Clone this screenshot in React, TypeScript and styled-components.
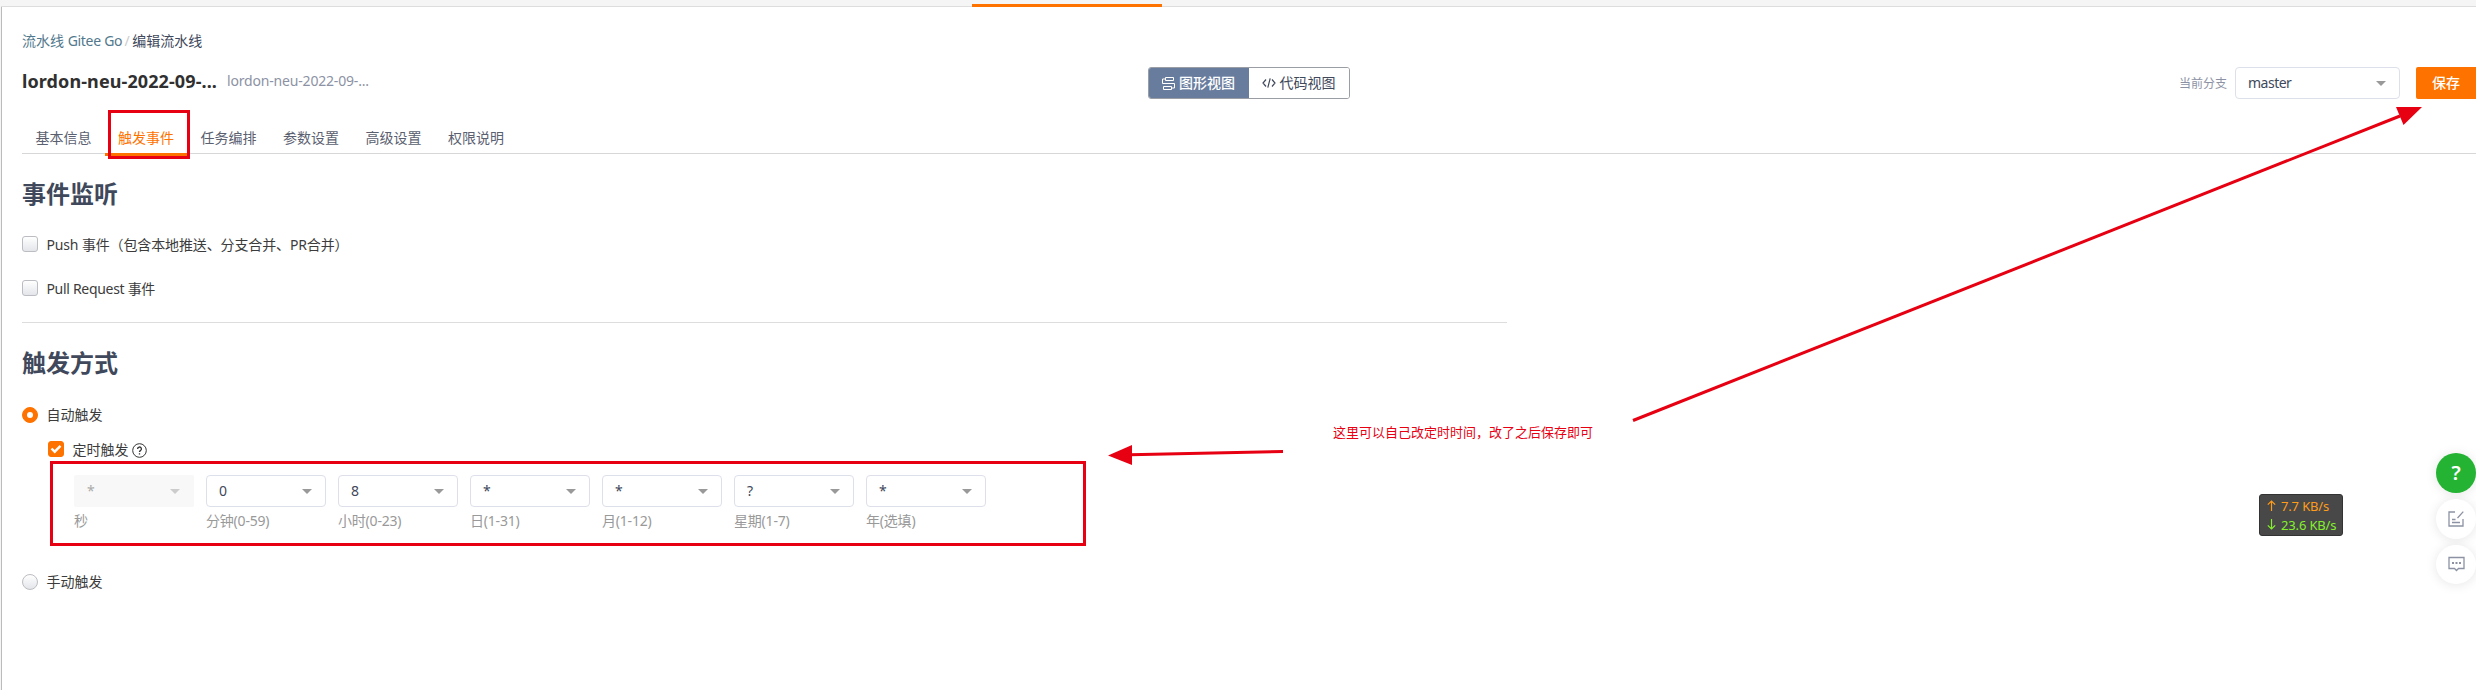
import React from 'react';
import styled, { createGlobalStyle, css } from 'styled-components';

const GlobalStyle = createGlobalStyle`
  * { box-sizing: border-box; }
  body {
    margin: 0;
    background: #fff;
    color: #40485b;
    font: 14px/20px "Noto Sans", "Noto Sans CJK SC", sans-serif;
    overflow: hidden;
  }
`;

const Page = styled.div`
  position: relative;
  height: 690px;
  border-left: 1px solid #f5f5f5;
  overflow: hidden;
`;

const TopBar = styled.div`
  height: 7px;
  padding: 4px 0 0 971px;
  background: #f5f5f5;
  border-bottom: 1px solid #ddd;
`;

const ActiveMark = styled.div`
  width: 190px;
  height: 3px;
  background: #fe7300;
`;

const Main = styled.main`
  height: 690px;
  padding-left: 20px;
  border-left: 1px solid #bbb;
`;

const Fit = styled.span<{ $ls?: number }>`
  letter-spacing: ${(p) => p.$ls ?? 0}px;
  white-space: pre;
`;

const Breadcrumb = styled.nav`
  display: flex;
  padding-top: 24px;
  height: 60px;
  white-space: nowrap;
`;

const CrumbLink = styled.a`
  color: #51788d;
`;

const Slash = styled.span`
  width: 10px;
  text-align: center;
  color: #ccc;
`;

const Header = styled.header`
  display: flex;
  align-items: center;
  height: 32px;
`;

const Names = styled.div`
  display: flex;
  align-items: center;
  width: 1126px;
  height: 32px;
  padding-bottom: 4px;
  white-space: nowrap;
`;

const Title = styled.h1`
  margin: 0;
  width: 205px;
  color: #303030;
  font-size: 18px;
  line-height: 28px;
`;

const Subtitle = styled.span`
  color: #8c92a4;
`;

const Toggle = styled.div`
  display: flex;
  width: 202px;
  height: 32px;
  border: 1px solid #9a9da3;
  border-radius: 3px;
  overflow: hidden;
`;

const ToggleItem = styled.button<{ $active?: boolean }>`
  display: flex;
  align-items: center;
  justify-content: center;
  gap: 4px;
  flex: 1;
  padding: 0 1px 0 0;
  border: 0;
  font: inherit;
  font-weight: ${(p) => (p.$active ? 500 : 400)};
  color: ${(p) => (p.$active ? '#fff' : '#40485b')};
  background: ${(p) => (p.$active ? '#687d9e' : '#fff')};
`;

const Branch = styled.div`
  display: flex;
  align-items: center;
  margin-left: auto;
`;

const BranchLabel = styled.span`
  margin-right: 8px;
  padding-top: 1px;
  font-size: 12px;
  color: #8c92a4;
`;

const Select = styled.div<{ $width: number; $disabled?: boolean }>`
  display: flex;
  align-items: center;
  justify-content: space-between;
  width: ${(p) => p.$width}px;
  height: 32px;
  padding: 0 13px 0 12px;
  border: 1px solid #dde0ea;
  border-radius: 4px;
  ${(p) =>
    p.$disabled &&
    css`
      border-color: #f8f8f8;
      border-radius: 2px;
      background: #f8f8f8;
      color: #aaa;
    `}
`;

const Caret = styled.i<{ $light?: boolean }>`
  border: 5px solid transparent;
  border-top-color: ${(p) => (p.$light ? '#ccc' : '#999')};
  border-bottom: 0;
`;

const Save = styled.button`
  width: 60px;
  height: 32px;
  margin-left: 16px;
  padding: 0;
  border: 0;
  border-radius: 2px 0 0 2px;
  background: #fe7300;
  color: #fff;
  font: inherit;
  font-weight: 500;
`;

const Tabs = styled.div`
  display: flex;
  height: 55px;
  border-bottom: 1px solid #d6d7d9;
`;

const Tab = styled.div<{ $active?: boolean }>`
  width: 82.5px;
  height: 57px;
  padding: 29px 0 0 13.5px;
  color: ${(p) => (p.$active ? '#fe7300' : '#5a6070')};
  border-bottom: 3px solid ${(p) => (p.$active ? '#fe7300' : 'transparent')};
`;

const SectionTitle = styled.h2`
  margin: 0;
  height: 36px;
  font-size: 24px;
  line-height: 34px;
  color: #40485b;
`;

const Listening = styled.section`
  width: 1485px;
  height: 169px;
  padding-top: 23px;
  border-bottom: 1px solid #ddd;
`;

const Choice = styled.label<{ $top: number; $indent?: number }>`
  display: flex;
  align-items: center;
  height: 20px;
  margin: ${(p) => p.$top}px 0 0 ${(p) => p.$indent ?? 0}px;
  color: #3c3c3c;
  white-space: nowrap;
`;

const Mark = styled.span<{ $round?: boolean; $on?: boolean }>`
  display: flex;
  align-items: center;
  justify-content: center;
  width: 16px;
  height: 16px;
  margin: 0 9px ${(p) => (p.$round ? 0 : 2)}px 0;
  border: 1px solid ${(p) => (p.$on ? '#fe7300' : '#bcbdc2')};
  border-radius: ${(p) => (p.$round ? '50%' : '3px')};
  background: ${(p) => (p.$on ? '#fe7300' : 'linear-gradient(#fff, #e3e5ea)')};
`;

const ChoiceText = styled.span`
  margin-left: -0.6px;
`;

const Dot = styled.i`
  width: 6px;
  height: 6px;
  border-radius: 50%;
  background: #fff;
`;

const HelpIcon = styled.svg`
  margin-left: 4px;
`;

const Trigger = styled.section`
  padding-top: 23px;
`;

const CronRow = styled.div`
  display: flex;
  gap: 12px;
  margin: 15px 0 0 52px;
`;

const CronField = styled.div`
  width: 120px;
  color: #999;
`;

const CronValue = styled.span<{ $muted?: boolean }>`
  color: ${(p) => (p.$muted ? '#aaa' : '#40485b')};
`;

const CronLabel = styled.div`
  margin-top: 4px;
`;

const HighlightBox = styled.div<{ $x: number; $y: number; $w: number; $h: number }>`
  position: absolute;
  left: ${(p) => p.$x}px;
  top: ${(p) => p.$y}px;
  width: ${(p) => p.$w}px;
  height: ${(p) => p.$h}px;
  border: 3px solid #e60012;
`;

const Arrows = styled.svg`
  position: absolute;
  left: -1px;
  top: 0;
`;

const Note = styled.div`
  position: absolute;
  left: 1332px;
  top: 422px;
  color: #e60012;
  font-size: 13px;
  white-space: nowrap;
`;

const Speed = styled.div`
  position: absolute;
  left: 2258px;
  top: 494px;
  width: 84px;
  height: 42px;
  padding: 1px 0 0 7px;
  border: 1px solid #333;
  border-radius: 3px;
  background: #484848;
`;

const SpeedLine = styled.div<{ $color: string }>`
  display: flex;
  align-items: center;
  gap: 5px;
  height: 19px;
  font-size: 13px;
  line-height: 18px;
  letter-spacing: -0.15px;
  color: ${(p) => p.$color};
`;

const FloatBar = styled.aside`
  position: absolute;
  right: 0;
  top: 453px;
  display: flex;
  flex-direction: column;
  gap: 6px;
`;

const FloatButton = styled.div<{ $green?: boolean }>`
  display: flex;
  align-items: center;
  justify-content: center;
  width: 40px;
  height: ${(p) => (p.$green ? 40 : 39.5)}px;
  border-radius: 50%;
  background: ${(p) => (p.$green ? '#24b333' : '#fff')};
  color: #fff;
  font-size: 20px;
  font-weight: 600;
  box-shadow: 0 1px 12px rgba(0, 0, 0, 0.1);
`;

const TABS = ['基本信息', '触发事件', '任务编排', '参数设置', '高级设置', '权限说明'];

const CRON = [
  { value: '*', label: '秒', disabled: true },
  { value: '0', label: '分钟(0-59)' },
  { value: '8', label: '小时(0-23)' },
  { value: '*', label: '日(1-31)' },
  { value: '*', label: '月(1-12)' },
  { value: '?', label: '星期(1-7)' },
  { value: '*', label: '年(选填)' },
];

export default function App() {
  return (
    <Page>
      <GlobalStyle />
      <TopBar><ActiveMark /></TopBar>
      <Main>
        <Breadcrumb>
          <CrumbLink>流水线 <Fit $ls={-0.3}>Gitee Go</Fit></CrumbLink>
          <Slash>/</Slash>
          <span>编辑流水线</span>
        </Breadcrumb>
        <Header>
          <Names>
            <Title><Fit $ls={0.1}>lordon-neu-2022-09-...</Fit></Title>
            <Subtitle><Fit $ls={-0.18}>lordon-neu-2022-09-...</Fit></Subtitle>
          </Names>
          <Toggle>
            <ToggleItem $active>
              <svg width="13" height="13" viewBox="0 0 13 13" fill="none" stroke="currentColor">
                <path d="M3.500 .5h8v3h-8zM1.500 9.500h8v3h-8zM3.500 2h-3v4.500h12v4.500h-3M4.500 6.500h4" />
              </svg>
              图形视图
            </ToggleItem>
            <ToggleItem>
              <svg width="14" height="10" viewBox="0 0 14 10" fill="none" stroke="currentColor" strokeWidth="1.200">
                <path d="M4 1.500L1 5l3 3.500M10 1.500L13 5l-3 3.500M8.200 .3l-2.400 9.400" />
              </svg>
              代码视图
            </ToggleItem>
          </Toggle>
          <Branch>
            <BranchLabel>当前分支</BranchLabel>
            <Select $width={165}><Fit $ls={-0.5}>master</Fit><Caret /></Select>
            <Save>保存</Save>
          </Branch>
        </Header>
        <Tabs>
          {TABS.map((t, i) => <Tab key={t} $active={i === 1}>{t}</Tab>)}
        </Tabs>
        <Listening>
          <SectionTitle>事件监听</SectionTitle>
          <Choice $top={22}><Mark /><ChoiceText><Fit $ls={-0.13}>Push 事件（包含本地推送、分支合并、PR合并）</Fit></ChoiceText></Choice>
          <Choice $top={24}><Mark /><ChoiceText><Fit $ls={-0.3}>Pull Request 事件</Fit></ChoiceText></Choice>
        </Listening>
        <Trigger>
          <SectionTitle>触发方式</SectionTitle>
          <Choice $top={23}><Mark $round $on><Dot /></Mark><ChoiceText>自动触发</ChoiceText></Choice>
          <Choice $top={15} $indent={26}>
            <Mark $on>
              <svg width="12" height="10" viewBox="0 0 12 10" fill="none" stroke="#fff" strokeWidth="2.400">
                <path d="M1.500 4.500l3.200 3.200L10.500 1.800" />
              </svg>
            </Mark>
            <ChoiceText>定时触发</ChoiceText>
            <HelpIcon width="15" height="15" viewBox="0 0 15 15" fill="none" stroke="#333">
              <circle cx="7.500" cy="7.500" r="6.800" />
              <path d="M5.600 6a1.900 1.900 0 1 1 2.800 1.600c-.7.4-.9.7-.9 1.500M7.500 10.200v1.300" strokeWidth="1.300" />
            </HelpIcon>
          </Choice>
          <CronRow>
            {CRON.map((f) => (
              <CronField key={f.label}>
                <Select $width={120} $disabled={f.disabled}>
                  <CronValue $muted={f.disabled}>{f.value}</CronValue>
                  <Caret $light={f.disabled} />
                </Select>
                <CronLabel><Fit $ls={-0.2}>{f.label}</Fit></CronLabel>
              </CronField>
            ))}
          </CronRow>
          <Choice $top={41}><Mark $round /><ChoiceText>手动触发</ChoiceText></Choice>
        </Trigger>
      </Main>

      <HighlightBox $x={107} $y={110} $w={82} $h={49} />
      <HighlightBox $x={49} $y={461} $w={1036} $h={85} />
      <Arrows width="2476" height="690" fill="#e60012" stroke="#e60012">
        <path d="M1633 420.500L2400 116" strokeWidth="3" />
        <path d="M2422 107L2396 107L2403.500 125z" stroke="none" />
        <path d="M1283 451.500L1130 454.800" strokeWidth="3" />
        <path d="M1108 455.500L1132 445L1132 465z" stroke="none" />
      </Arrows>
      <Note>这里可以自己改定时时间，改了之后保存即可</Note>
      <Speed>
        <SpeedLine $color="#ff9c1a">
          <svg width="9" height="11" viewBox="0 0 9 11" fill="none" stroke="currentColor" strokeWidth="1.200"><path d="M4.500 11V1M.8 4.700L4.500 1l3.700 3.700" /></svg>
          7.7 KB/s
        </SpeedLine>
        <SpeedLine $color="#84f02c">
          <svg width="9" height="11" viewBox="0 0 9 11" fill="none" stroke="currentColor" strokeWidth="1.200"><path d="M4.500 0v10M.8 6.300L4.500 10l3.700-3.700" /></svg>
          23.6 KB/s
        </SpeedLine>
      </Speed>
      <FloatBar>
        <FloatButton $green>?</FloatButton>
        <FloatButton>
          <svg width="16" height="16" viewBox="0 0 16 16" fill="none" stroke="#8c92a4" strokeWidth="1.300">
            <path d="M7 1H1v14h14V8M15.300.6L9.500 7M4 8.500h3.500M4 11.500h8" />
          </svg>
        </FloatButton>
        <FloatButton>
          <svg width="17" height="16" viewBox="0 0 17 16" fill="none" stroke="#8c92a4" strokeWidth="1.300">
            <path d="M1 1.500h15v11h-5.500l-2 2-2-2H1z" />
            <path d="M4 7h2M7.500 7h2M11 7h2" strokeWidth="2" />
          </svg>
        </FloatButton>
      </FloatBar>
    </Page>
  );
}
